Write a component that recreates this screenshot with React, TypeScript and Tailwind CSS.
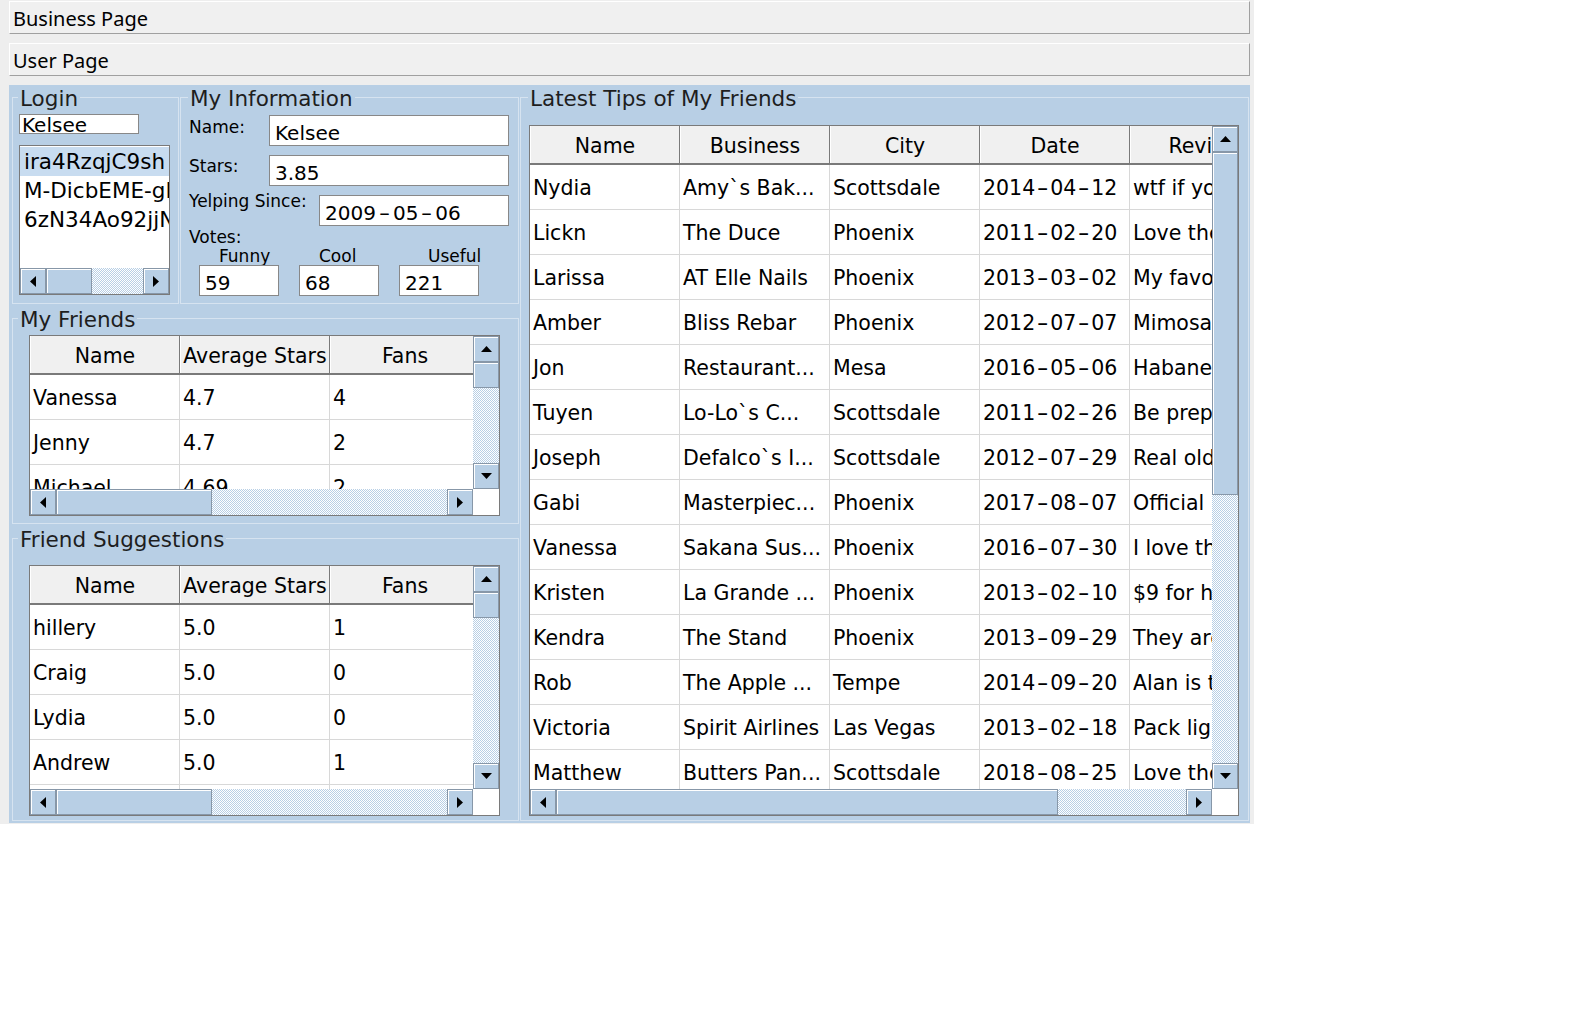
import React from "react";

const TRACK =
  "bg-[image:repeating-conic-gradient(#b8cfe5_0%_25%,#ffffff_0%_50%)] bg-[length:2px_2px]";

function Tri({ dir }: { dir: "up" | "down" | "left" | "right" }) {
  if (dir === "up")
    return (
      <svg width="11" height="6" viewBox="0 0 11 6">
        <polygon points="0,6 5.5,0 11,6" fill="#000" />
      </svg>
    );
  if (dir === "down")
    return (
      <svg width="11" height="6" viewBox="0 0 11 6">
        <polygon points="0,0 11,0 5.5,6" fill="#000" />
      </svg>
    );
  if (dir === "left")
    return (
      <svg width="6" height="11" viewBox="0 0 6 11">
        <polygon points="6,0 6,11 0,5.5" fill="#000" />
      </svg>
    );
  return (
    <svg width="6" height="11" viewBox="0 0 6 11">
      <polygon points="0,0 0,11 6,5.5" fill="#000" />
    </svg>
  );
}

function ArrowBtn({ dir }: { dir: "up" | "down" | "left" | "right" }) {
  return (
    <div className="w-[26px] h-[26px] shrink-0 bg-[#b8cfe5] border border-[#8797a8] shadow-[inset_1px_1px_0_#ffffff] flex items-center justify-center">
      <Tri dir={dir} />
    </div>
  );
}

function VScroll({ thumb }: { thumb: string }) {
  return (
    <div className="w-[26px] shrink-0 flex flex-col">
      <ArrowBtn dir="up" />
      <div className={`${thumb} w-[26px] shrink-0 bg-[#b8cfe5] border border-[#8797a8] shadow-[inset_1px_1px_0_#ffffff]`} />
      <div className={`flex-1 ${TRACK}`} />
      <ArrowBtn dir="down" />
    </div>
  );
}

function HScroll({ thumb }: { thumb: string }) {
  return (
    <div className="flex-1 min-w-0 h-[26px] flex">
      <ArrowBtn dir="left" />
      <div className={`${thumb} h-[26px] shrink-0 bg-[#b8cfe5] border border-[#8797a8] shadow-[inset_1px_1px_0_#ffffff]`} />
      <div className={`flex-1 ${TRACK}`} />
      <ArrowBtn dir="right" />
    </div>
  );
}

function DateText({ s, dash }: { s: string; dash: string }) {
  const parts = s.split("-");
  return (
    <>
      {parts.map((p, i) => (
        <React.Fragment key={i}>
          {i > 0 && (
            <span className={`${dash} inline-block text-center`}>
              <span className="inline-block scale-x-[1.6]">-</span>
            </span>
          )}
          {p}
        </React.Fragment>
      ))}
    </>
  );
}

function Table({
  cols,
  rows,
  outer,
  vThumb,
  hThumb,
  dateCol = -1,
}: {
  cols: string[];
  rows: string[][];
  outer: string;
  vThumb: string;
  hThumb: string;
  dateCol?: number;
}) {
  return (
    <div className={`${outer} border border-[#7a7a7a] bg-white flex flex-col font-['DejaVu_Sans',sans-serif] text-[20.5px] text-black`}>
      <div className="flex flex-1 min-h-0">
        <div className="flex-1 min-w-0 overflow-hidden flex flex-col">
          <div className="flex h-[39px] shrink-0 border-b-2 border-b-[#7a7a7a] bg-[#f0f0f0]">
            {cols.map((c) => (
              <div
                key={c}
                className="w-[150px] shrink-0 border-r border-r-[#7a7a7a] border-l border-l-white flex items-center justify-center pt-[3px] whitespace-nowrap overflow-hidden"
              >
                {c}
              </div>
            ))}
          </div>
          {rows.map((r, ri) => (
            <div key={ri} className="flex h-[45px] shrink-0 border-b border-b-[#d8d8d8]">
              {r.map((cell, ci) => (
                <div
                  key={ci}
                  className="w-[150px] shrink-0 border-r border-r-[#d8d8d8] px-[3px] pt-[3px] flex items-center whitespace-nowrap overflow-hidden"
                >
                  {ci === dateCol ? <DateText s={cell} dash="w-[15px]" /> : cell}
                </div>
              ))}
            </div>
          ))}
        </div>
        <VScroll thumb={vThumb} />
      </div>
      <div className="flex h-[26px] shrink-0">
        <HScroll thumb={hThumb} />
        <div className="w-[26px] h-[26px] bg-white" />
      </div>
    </div>
  );
}

function Group({
  title,
  cls,
  legendCls,
  children,
}: {
  title: string;
  cls: string;
  legendCls: string;
  children: React.ReactNode;
}) {
  return (
    <fieldset className={`${cls} shrink-0 border border-[#d6e3f0] min-w-0 font-['DejaVu_Sans',sans-serif]`}>
      <legend className={`${legendCls} px-[2px] pt-[4px] text-[21.5px] leading-[20px] text-[#1e1e1e]`}>{title}</legend>
      {children}
    </fieldset>
  );
}

function Bar({ label }: { label: string }) {
  return (
    <div className="h-[33px] shrink-0 bg-[#f0f0f0] border border-t-white border-l-white border-b-[#a0a0a0] border-r-[#a0a0a0] flex items-center pl-[3px] pt-[3px] text-[20px] text-black font-['Noto_Sans',sans-serif]">
      {label}
    </div>
  );
}

function Field({ cls, children }: { cls: string; children: React.ReactNode }) {
  return (
    <div className={`${cls} shrink-0 bg-white border border-[#888888] flex items-center pl-[5px] pt-[4px] text-[20px] text-black whitespace-nowrap overflow-hidden`}>
      {children}
    </div>
  );
}

const tips: string[][] = [
  ["Nydia", "Amy`s Bak...", "Scottsdale", "2014-04-12", "wtf if you d..."],
  ["Lickn", "The Duce", "Phoenix", "2011-02-20", "Love the fo..."],
  ["Larissa", "AT Elle Nails", "Phoenix", "2013-03-02", "My favorite ..."],
  ["Amber", "Bliss Rebar", "Phoenix", "2012-07-07", "Mimosas and..."],
  ["Jon", "Restaurant...", "Mesa", "2016-05-06", "Habanero s..."],
  ["Tuyen", "Lo-Lo`s C...", "Scottsdale", "2011-02-26", "Be prepared..."],
  ["Joseph", "Defalco`s I...", "Scottsdale", "2012-07-29", "Real old sc..."],
  ["Gabi", "Masterpiec...", "Phoenix", "2017-08-07", "Official ..."],
  ["Vanessa", "Sakana Sus...", "Phoenix", "2016-07-30", "I love the ..."],
  ["Kristen", "La Grande ...", "Phoenix", "2013-02-10", "$9 for half..."],
  ["Kendra", "The Stand", "Phoenix", "2013-09-29", "They are a..."],
  ["Rob", "The Apple ...", "Tempe", "2014-09-20", "Alan is the..."],
  ["Victoria", "Spirit Airlines", "Las Vegas", "2013-02-18", "Pack light..."],
  ["Matthew", "Butters Pan...", "Scottsdale", "2018-08-25", "Love the c..."],
];

const friends: string[][] = [
  ["Vanessa", "4.7", "4"],
  ["Jenny", "4.7", "2"],
  ["Michael", "4.69", "2"],
];

const suggestions: string[][] = [
  ["hillery", "5.0", "1"],
  ["Craig", "5.0", "0"],
  ["Lydia", "5.0", "0"],
  ["Andrew", "5.0", "1"],
  ["Jessica", "5.0", "0"],
];

export default function App() {
  return (
    <div className="w-[1254px] h-[824px] bg-[#eeeeee] pl-[9px] pr-[4px] pt-[1px] flex flex-col gap-[9px]">
      <Bar label="Business Page" />
      <Bar label="User Page" />
      <div className="h-[738px] shrink-0 bg-[#b8cfe5] flex pl-[3px] pr-[1px] pb-[2px] gap-[1px]">
        <div className="w-[507px] shrink-0 flex flex-col gap-[2px]">
          <div className="flex gap-[1px] h-[219px] shrink-0">
            <Group title="Login" cls="w-[167px] h-[219px]" legendCls="ml-[5px]">
              <div className="pl-[6px] pt-[5px]">
                <div className="w-[120px] h-[20px] bg-white border border-[#888888] pl-[2px] text-[20px] leading-[21px] text-black overflow-hidden whitespace-nowrap">
                  Kelsee
                </div>
                <div className="mt-[11px] w-[151px] h-[150px] border border-[#7a7a7a] bg-white flex flex-col">
                  <div className="flex-1 min-h-0 overflow-hidden pt-[1px] text-[21.5px] text-black">
                    <div className="h-[29px] leading-[29px] px-[4px] whitespace-nowrap bg-[#c8dcf0]">ira4RzqjC9sh</div>
                    <div className="h-[29px] leading-[29px] px-[4px] whitespace-nowrap">M-DicbEME-gP</div>
                    <div className="h-[29px] leading-[29px] px-[4px] whitespace-nowrap">6zN34Ao92jjN</div>
                  </div>
                  <div className="flex h-[26px] shrink-0">
                    <HScroll thumb="w-[46px]" />
                  </div>
                </div>
              </div>
            </Group>
            <Group title="My Information" cls="w-[339px] h-[219px]" legendCls="ml-[7px]">
              <div className="pl-[8px] pt-[6px] text-black">
                <div className="flex items-start h-[31px]">
                  <div className="w-[80px] pt-[2px] text-[17px] leading-[20px]">Name:</div>
                  <Field cls="w-[240px] h-[31px]">Kelsee</Field>
                </div>
                <div className="flex items-start h-[31px] mt-[9px]">
                  <div className="w-[80px] pt-[1px] text-[17px] leading-[20px]">Stars:</div>
                  <Field cls="w-[240px] h-[31px]">3.85</Field>
                </div>
                <div className="flex items-start h-[31px] mt-[9px]">
                  <div className="w-[130px] -mt-[4px] text-[17px] leading-[20px] whitespace-nowrap">Yelping Since:</div>
                  <Field cls="w-[190px] h-[31px]">
                    <DateText s="2009-05-06" dash="w-[17px]" />
                  </Field>
                </div>
                <div className="mt-[1px] text-[17px] leading-[20px]">Votes:</div>
                <div className="flex gap-[20px] pl-[10px]">
                  <div className="w-[80px] flex flex-col">
                    <div className="pl-[20px] text-[17px] leading-[18px]">Funny</div>
                    <Field cls="w-[80px] h-[31px]">59</Field>
                  </div>
                  <div className="w-[80px] flex flex-col">
                    <div className="pl-[20px] text-[17px] leading-[18px]">Cool</div>
                    <Field cls="w-[80px] h-[31px]">68</Field>
                  </div>
                  <div className="w-[80px] flex flex-col">
                    <div className="pl-[29px] text-[17px] leading-[18px]">Useful</div>
                    <Field cls="w-[80px] h-[31px]">221</Field>
                  </div>
                </div>
              </div>
            </Group>
          </div>
          <Group title="My Friends" cls="w-[507px] h-[218px]" legendCls="ml-[5px]">
            <div className="pl-[16px] pt-[5px]">
              <Table
                cols={["Name", "Average Stars", "Fans"]}
                rows={friends}
                outer="w-[471px] h-[181px]"
                vThumb="h-[26px]"
                hThumb="w-[156px]"
              />
            </div>
          </Group>
          <Group title="Friend Suggestions" cls="w-[507px] h-[295px]" legendCls="ml-[5px]">
            <div className="pl-[16px] pt-[15px]">
              <Table
                cols={["Name", "Average Stars", "Fans"]}
                rows={suggestions}
                outer="w-[471px] h-[251px]"
                vThumb="h-[26px]"
                hThumb="w-[156px]"
              />
            </div>
          </Group>
        </div>
        <Group title="Latest Tips of My Friends" cls="w-[729px] h-[736px]" legendCls="ml-[7px]">
          <div className="pl-[8px] pt-[16px]">
            <Table
              cols={["Name", "Business", "City", "Date", "Review"]}
              rows={tips}
              outer="w-[710px] h-[691px]"
              vThumb="h-[343px]"
              hThumb="w-[502px]"
              dateCol={3}
            />
          </div>
        </Group>
      </div>
    </div>
  );
}
